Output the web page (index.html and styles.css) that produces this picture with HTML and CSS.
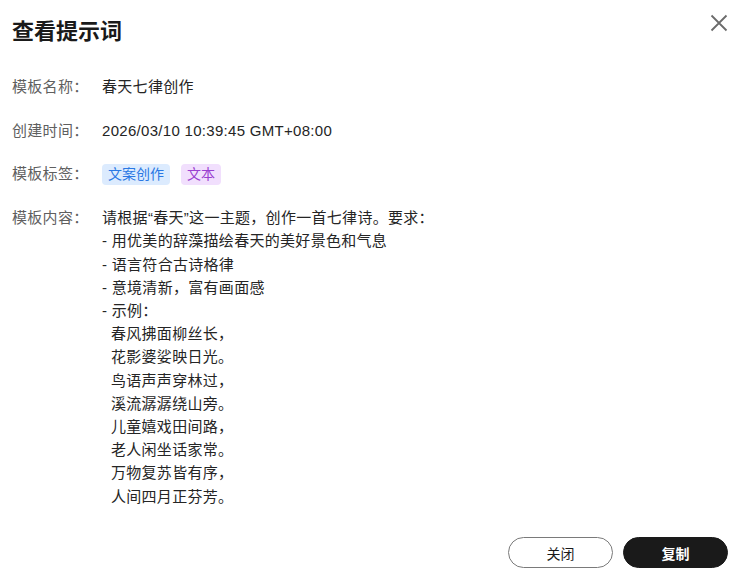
FILE: index.html
```html
<!DOCTYPE html>
<html lang="zh">
<head>
<meta charset="utf-8">
<link rel="stylesheet" href="styles.css">
</head>
<body>
<div class="dialog">
  <div class="header">
    <h1 class="title">查看提示词</h1>
    <button class="close" aria-label="关闭">
      <svg width="18" height="18" viewBox="0 0 18 18"><path d="M1.5 1.5 L16.5 16.5 M16.5 1.5 L1.5 16.5" stroke="#6b6b6b" stroke-width="1.8" fill="none"/></svg>
    </button>
  </div>
  <div class="body">
    <div class="row"><div class="label">模板名称：</div><div class="value">春天七律创作</div></div>
    <div class="row"><div class="label">创建时间：</div><div class="value">2026/03/10 10:39:45 GMT+08:00</div></div>
    <div class="row"><div class="label">模板标签：</div><div class="value tags"><span class="tag tag-blue">文案创作</span><span class="tag tag-purple">文本</span></div></div>
    <div class="row"><div class="label">模板内容：</div><div class="value content">请根据“春天”这一主题，创作一首七律诗。要求：
- 用优美的辞藻描绘春天的美好景色和气息
- 语言符合古诗格律
- 意境清新，富有画面感
- 示例：
  春风拂面柳丝长，
  花影婆娑映日光。
  鸟语声声穿林过，
  溪流潺潺绕山旁。
  儿童嬉戏田间路，
  老人闲坐话家常。
  万物复苏皆有序，
  人间四月正芬芳。</div></div>
  </div>
  <div class="footer">
    <button class="btn btn-outline">关闭</button>
    <button class="btn btn-dark">复制</button>
  </div>
</div>
</body>
</html>
```
FILE: styles.css
```css
html, body {
  margin: 0;
  padding: 0;
  background: #fff;
}
body {
  font-family: "Liberation Sans", Arial, "Noto Sans CJK SC", sans-serif;
  color: #252525;
  width: 744px;
  height: 579px;
  overflow: hidden;
}
.dialog {
  padding: 0 16px 0 12px;
  display: flex;
  flex-direction: column;
  height: 579px;
  box-sizing: border-box;
}
.header {
  display: flex;
  justify-content: space-between;
  align-items: flex-start;
  height: 75px;
}
.title {
  margin: 17px 0 0 0;
  font-size: 22px;
  line-height: 30px;
  font-weight: 700;
  color: #1a1a1a;
}
.close {
  margin: 14px 0 0 0;
  padding: 0;
  border: none;
  background: none;
  width: 18px;
  height: 18px;
  cursor: pointer;
}
.close svg { display: block; }
.body {
  display: flex;
  flex-direction: column;
  gap: 20.5px;
  flex: 1;
}
.row {
  display: flex;
  font-size: 15px;
  line-height: 23.2px;
  letter-spacing: 0.3px;
}
.label {
  width: 90px;
  flex: none;
  color: #5f5f5f;
}
.value {
  color: #252525;
}
.content {
  white-space: pre-wrap;
}
.tags {
  display: flex;
  gap: 11px;
  align-items: center;
  letter-spacing: 0;
}
.tag {
  font-size: 14px;
  line-height: 21px;
  padding: 0 6px;
  border-radius: 4px;
}
.tag-blue {
  background: #dcebfe;
  color: #2a78e4;
}
.tag-purple {
  background: #f1dffd;
  color: #9a3fd0;
}
.footer {
  display: flex;
  justify-content: flex-end;
  gap: 10px;
  padding-bottom: 11px;
}
.btn {
  width: 105px;
  height: 31px;
  border-radius: 16px;
  font-family: inherit;
  font-size: 14px;
  cursor: pointer;
}
.btn-outline {
  background: #fff;
  border: 1px solid #7a7a7a;
  color: #1a1a1a;
}
.btn-dark {
  background: #1a1a1a;
  border: 1px solid #1a1a1a;
  color: #fff;
  font-weight: 700;
}
```
